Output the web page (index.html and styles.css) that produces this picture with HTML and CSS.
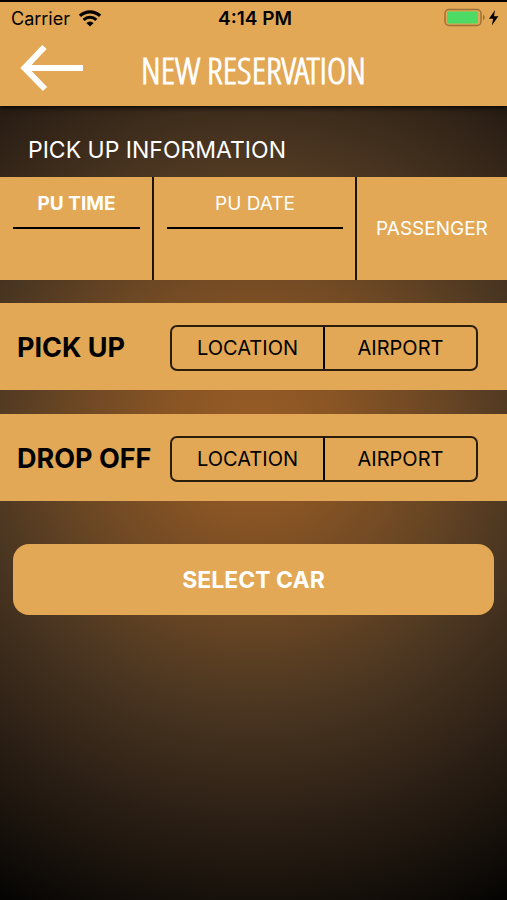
FILE: index.html
```html
<!DOCTYPE html>
<html lang="en">
<head>
  <meta charset="UTF-8" />
  <meta name="viewport" content="width=device-width, initial-scale=1.0"/>
  <title>New Reservation</title>
  <link rel="stylesheet" href="styles.css">
</head>
<body>
  <header class="header">
    <div class="status-bar">
      <div class="carrier">
        <span>Carrier</span>
        <svg class="wifi" viewBox="0 0 22 16" width="24" height="17" aria-hidden="true">
          <path d="M1.5 5.6 A13.5 13.5 0 0 1 20.5 5.6" fill="none" stroke="#000" stroke-width="3"/>
          <path d="M5 9.3 A8.6 8.6 0 0 1 17 9.3" fill="none" stroke="#000" stroke-width="2.8"/>
          <path d="M11 15.6 L7.6 12.2 A4.8 4.8 0 0 1 14.4 12.2 Z"/>
        </svg>
      </div>
      <div class="clock">4:14 PM</div>
      <div class="battery">
        <svg viewBox="0 0 56 20" width="56" height="20" aria-hidden="true">
          <rect x="2" y="1.500" width="36" height="16" rx="4" fill="none" stroke="#9c7138" stroke-width="1.5"/>
          <rect x="4" y="3.500" width="31" height="12" rx="1.5" fill="#4cd964"/>
          <path d="M40 6.500 Q43.500 9.500 40 12.500 Z" fill="#9c7138"/>
          <path d="M52 2 L46 10.800 H50.200 L48.800 17.400 L55.400 8.200 H51 Z"/>
        </svg>
      </div>
    </div>
    <div class="nav">
      <button class="back" aria-label="Back">
        <svg viewBox="0 0 64 48" width="64" height="48" aria-hidden="true">
          <path d="M24.500 2 L4.500 23 L25 44 M5 23 H63" fill="none" stroke="#fff" stroke-width="6"/>
        </svg>
      </button>
      <h1>NEW RESERVATION</h1>
    </div>
  </header>

  <main>
    <h2>PICK UP INFORMATION</h2>

    <div class="info">
      <div class="field">
        <label class="active" for="puTime">PU TIME</label>
        <input type="text" id="puTime">
      </div>
      <div class="field">
        <label for="puDate">PU DATE</label>
        <input type="text" id="puDate">
      </div>
      <button class="passenger">PASSENGER</button>
    </div>

    <section class="place">
      <h3>PICK UP</h3>
      <div class="segment">
        <button>LOCATION</button>
        <button>AIRPORT</button>
      </div>
    </section>

    <section class="place">
      <h3>DROP OFF</h3>
      <div class="segment">
        <button>LOCATION</button>
        <button>AIRPORT</button>
      </div>
    </section>

    <button class="select-car">SELECT CAR</button>
  </main>
</body>
</html>
```
FILE: styles.css
```css
* {
  box-sizing: border-box;
}

body {
  margin: 0;
  min-height: 100vh;
  font-family: Inter, Roboto, sans-serif;
  background: #000 radial-gradient(ellipse 510px 510px at 50% 430px, #965c26 0%, #8a5524 16%, #6b4724 36%, #4b3621 54%, #2e2116 75%, #17110b 92%, #000 108%) no-repeat;
}

h1, h2, h3 {
  margin: 0;
}

button {
  font-family: inherit;
  background: none;
  border: none;
  padding: 0;
  cursor: pointer;
}

.header {
  border-top: 2px solid #000;
  background-color: #e2a855;
  box-shadow: 0 1px 6px #000;
}

.status-bar {
  display: grid;
  grid-template-columns: 1fr auto 1fr;
  align-items: center;
  height: 32px;
  padding: 0 8px 0 11px;
  font-size: 18px;
}

.carrier {
  display: flex;
  align-items: center;
  gap: 8px;
}

.clock {
  font-size: 19px;
  font-weight: 600;
}

.battery {
  display: flex;
  justify-content: flex-end;
}

.nav {
  display: grid;
  grid-template-columns: 64px 1fr 64px;
  align-items: center;
  height: 72px;
  padding: 0 20px 2px;
}

.back svg {
  display: block;
}

h1 {
  color: #fff;
  font-family: "Open Sans Condensed Light", "Open Sans Light Condensed", "Roboto Condensed Light", "Roboto Condensed", "Liberation Sans Narrow", sans-serif;
  font-size: 37px;
  font-weight: 300;
  -webkit-text-stroke: 1px #fff;
  text-align: center;
  white-space: nowrap;
}

h2 {
  padding: 29px 28px 0;
  height: 71px;
  color: #fff;
  font-size: 23px;
  line-height: 30px;
  font-weight: 400;
}

.info {
  display: grid;
  grid-template-columns: 3fr 4fr 3fr;
  height: 103px;
  margin-bottom: 23px;
  background-color: #e2a855;
  color: #fff;
  font-size: 19px;
}

.field {
  display: flex;
  flex-direction: column;
  padding: 0 12px 0 13px;
}

.field + .field,
.passenger {
  border-left: 2px solid #1c1309;
}

.field label {
  padding-top: 3px;
  line-height: 47px;
  text-align: center;
}

.field .active {
  font-weight: 700;
}

.field input {
  width: 100%;
  height: 40px;
  border: none;
  border-top: 2px solid #000;
  background: none;
  color: #fff;
  font: inherit;
  text-align: center;
}

.passenger {
  color: #fff;
  font-size: 19px;
}

.place {
  display: grid;
  grid-template-columns: 153px 1fr;
  align-items: center;
  height: 87px;
  margin-bottom: 24px;
  padding: 2px 29px 0 17px;
  background-color: #e2a855;
}

.place h3 {
  font-size: 27px;
  font-weight: 700;
}

.segment {
  display: flex;
  height: 46px;
  border: 2px solid #2b1d0c;
  border-radius: 7px;
}

.segment button {
  flex: 1;
  color: #000;
  font-size: 20px;
}

.segment button + button {
  border-left: 2px solid #000;
}

.select-car {
  display: block;
  width: calc(100% - 26px);
  height: 71px;
  margin: 43px 13px 0;
  border-radius: 16px;
  background-color: #e2a855;
  color: #fff;
  font-size: 23px;
  font-weight: 700;
}
```
